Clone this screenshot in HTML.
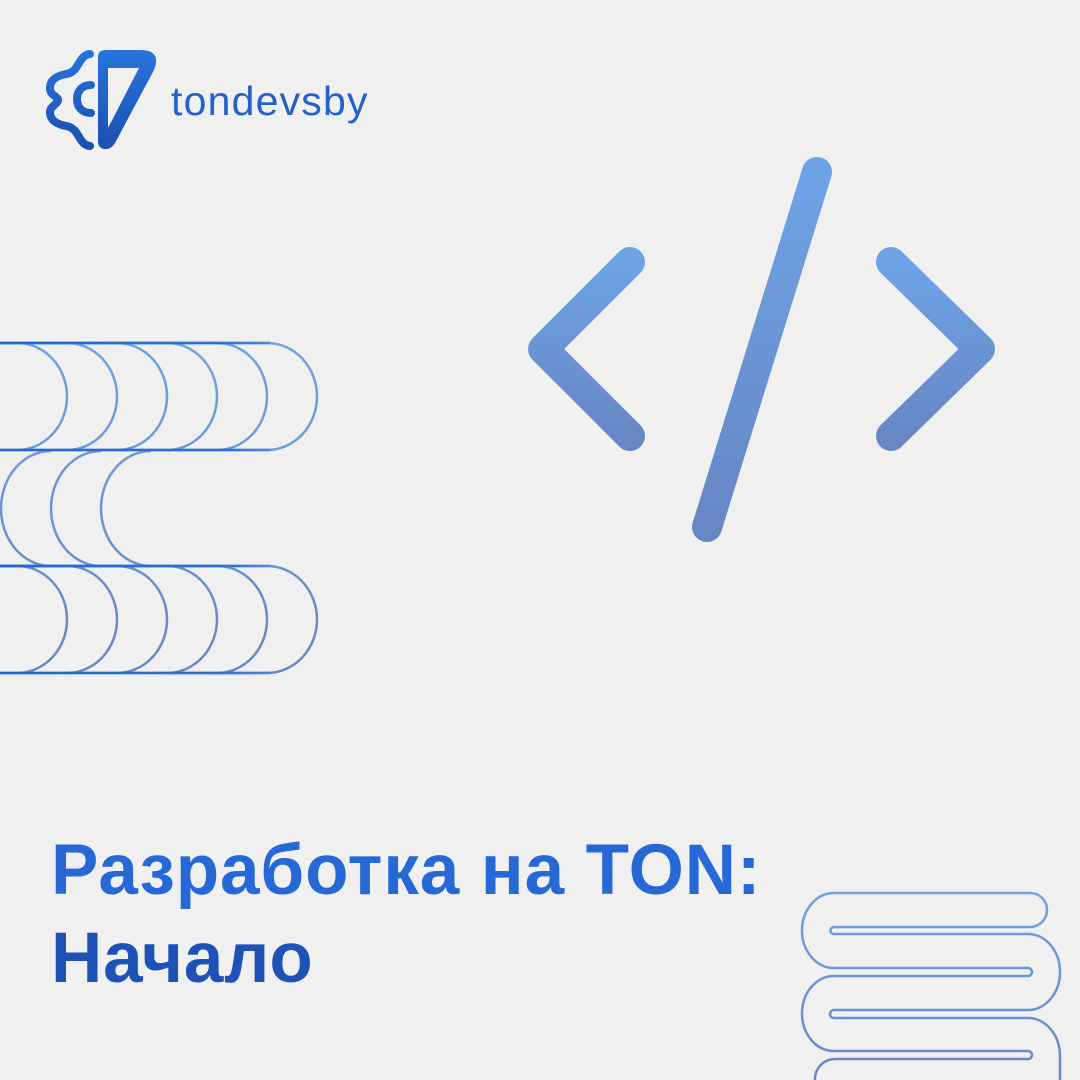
<!DOCTYPE html>
<html><head><meta charset="utf-8"><style>
html,body{margin:0;padding:0;background:#f0f0f0;}
body{width:1080px;height:1080px;position:relative;overflow:hidden;font-family:"Liberation Sans",sans-serif;}
.logo{position:absolute;left:171px;top:78px;font-size:41px;color:#2462c9;letter-spacing:1.2px;}
.t{position:absolute;left:51px;font-weight:bold;font-size:71px;letter-spacing:0.9px;}
</style></head><body>
<svg width="1080" height="1080" style="position:absolute;left:0;top:0">
<defs>
<linearGradient id="cg" x1="0" y1="0" x2="0" y2="1"><stop offset="0" stop-color="#6ea3e6"/><stop offset="1" stop-color="#6787c4"/></linearGradient>
<linearGradient id="lg" gradientUnits="userSpaceOnUse" x1="0" y1="50" x2="0" y2="150"><stop offset="0" stop-color="#2874dc"/><stop offset="1" stop-color="#1c4fb0"/></linearGradient>
<linearGradient id="wg" gradientUnits="userSpaceOnUse" x1="0" y1="343" x2="0" y2="673"><stop offset="0" stop-color="#6ea3e6"/><stop offset="1" stop-color="#6787c4"/></linearGradient>
<linearGradient id="hl" gradientUnits="userSpaceOnUse" x1="0" y1="0" x2="320" y2="0"><stop offset="0" stop-color="#2166d4"/><stop offset="0.7" stop-color="#3070d4"/><stop offset="1" stop-color="#7aa2dc"/></linearGradient>
<linearGradient id="sg" gradientUnits="userSpaceOnUse" x1="0" y1="890" x2="0" y2="1080"><stop offset="0" stop-color="#6ea3e6"/><stop offset="1" stop-color="#6787c4"/></linearGradient>
</defs>
<path fill="url(#lg)" fill-rule="evenodd" d="M98,57 Q98,50 106,50 H140 Q162,50 154,70 L115,143 Q111,150 104,149 Q98,148 98,141 Z M108,68 H139 L108,128 Z"/>
<path fill="none" stroke="url(#lg)" stroke-width="8" stroke-linecap="round" stroke-linejoin="round" d="M90,54 C78,55 80,72 66,74 C56,76 50,80 50,88 C50,96 58,96 58,100 C58,104 50,106 50,112 C50,120 56,124 66,126 C80,128 78,145 90,146"/>
<path fill="none" stroke="url(#lg)" stroke-width="8" stroke-linecap="round" d="M91,85 C82,85 77,91 77,99 C77,107 82,113 91,113"/>
<g fill="none" stroke="url(#cg)" stroke-width="30" stroke-linecap="round" stroke-linejoin="round">
<path d="M630,262 L543,349 L630,436"/>
<path d="M891,262 L980,349 L891,436"/>
<path d="M817,172 L707,527"/>
</g>
<g fill="none" stroke="url(#wg)" stroke-width="2.5">
<path d="M0,343 H17 A50,53.5 0 0 1 17,450"/>
<path d="M0,343 H67 A50,53.5 0 0 1 67,450"/>
<path d="M0,343 H117 A50,53.5 0 0 1 117,450"/>
<path d="M0,343 H167 A50,53.5 0 0 1 167,450"/>
<path d="M0,343 H217 A50,53.5 0 0 1 217,450"/>
<path d="M0,343 H267 A50,53.5 0 0 1 267,450 H0"/>
<path d="M51,451 A50,57.5 0 0 0 51,566"/>
<path d="M101,451 A50,57.5 0 0 0 101,566"/>
<path d="M151,451 A50,57.5 0 0 0 151,566"/>
<path d="M0,566 H17 A50,53.5 0 0 1 17,673"/>
<path d="M0,566 H67 A50,53.5 0 0 1 67,673"/>
<path d="M0,566 H117 A50,53.5 0 0 1 117,673"/>
<path d="M0,566 H167 A50,53.5 0 0 1 167,673"/>
<path d="M0,566 H217 A50,53.5 0 0 1 217,673"/>
<path d="M0,566 H267 A50,53.5 0 0 1 267,673 H0"/>
</g>
<path fill="none" stroke="url(#hl)" stroke-width="2.5" d="M0,343 H270 M0,450 H270 M0,566 H270 M0,673 H270"/>
<g fill="none" stroke="url(#sg)" stroke-width="2.5">
<path d="M1030,893 H834 A32,37.5 0 0 0 834,968 H1028 A4,4 0 0 1 1028,976 H834 A32,37.5 0 0 0 834,1051 H1028 A4,4 0 0 1 1028,1059 H835 A20,20 0 0 0 815,1079 V1090"/>
<path d="M1030,893 A17,17 0 0 1 1030,927 H834 A3.5,3.5 0 0 0 834,934 H1028 A32,38 0 0 1 1028,1010 H834 A4,4 0 0 0 834,1018 H1028 A32,38 0 0 1 1060,1056 V1090"/>
</g>
</svg>
<div class="logo">tondevsby</div>
<div class="t" style="top:830px;color:#2668d6">Разработка на TON:</div>
<div class="t" style="top:918px;color:#1f52b6">Начало</div>
</body></html>
